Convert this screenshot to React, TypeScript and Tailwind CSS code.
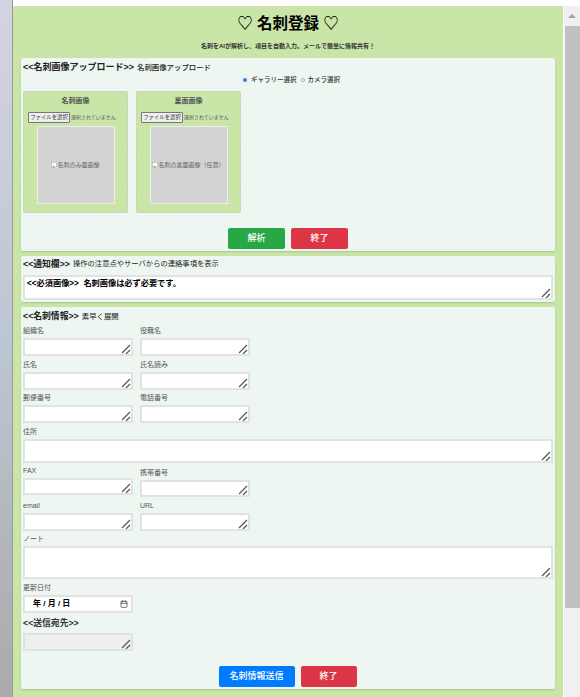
import { Calendar } from "lucide-react";

const font = "font-['Liberation_Sans','Noto_Sans_CJK_JP',sans-serif]";

function Label({ text }: { text: string }) {
  return <div className="h-[8px] text-[7px] leading-[8px] text-[#555]">{text}</div>;
}

// textarea with the heavier resize grip seen in the screenshot
function Box({ h, w, value, disabled = false, mt = "mt-[3px]" }: { h: string; w: string; value?: string; disabled?: boolean; mt?: string }) {
  return (
    <div className={`relative ${mt} ${h} ${w}`}>
      <textarea
        readOnly
        disabled={disabled}
        value={value ?? ""}
        className={`block h-full w-full resize-none rounded-[1px] border-2 border-[#e2e2e2] px-[2px] py-[1px] text-[8.2px] font-bold leading-[11px] text-black ${disabled ? "bg-[#efefef]" : "bg-white"}`}
      />
      <svg width="10" height="10" viewBox="0 0 10 10" className="pointer-events-none absolute bottom-[2px] right-[2px]">
        <path d="M1 9L9 1M5 10L9 6" stroke="#555" strokeWidth="1.2" fill="none" />
      </svg>
    </div>
  );
}

function Field({ label, h = "h-[18px]", full = false, mt, className = "" }: { label: string; h?: string; full?: boolean; mt?: string; className?: string }) {
  return (
    <div className={`${full ? "w-[530px]" : "w-[110px]"} ${className}`}>
      <Label text={label} />
      <Box h={h} w="w-full" mt={mt} />
    </div>
  );
}

function ImageBox({ title, alt }: { title: string; alt: string }) {
  return (
    <div className="h-[122px] w-[105px] rounded-[2px] border border-dashed border-[#ccc] bg-[#c9e6a8]">
      <div className="mt-[5px] text-center text-[7px] font-bold leading-[8px] text-[#555]">{title}</div>
      <div className="mt-[7px] flex items-center gap-[1px] pl-[4px]">
        <button className="h-[11px] w-[42px] shrink-0 whitespace-nowrap rounded-[1px] border border-[#777] bg-[#efefef] p-0 text-[5.4px] leading-[9px] text-[#333]">ファイルを選択</button>
        <span className="whitespace-nowrap text-[5px] text-[#555]">選択されていません</span>
      </div>
      <div className="mx-auto mt-[3px] flex h-[78px] w-[78px] items-center justify-center whitespace-nowrap border border-[#eee] bg-[#d3d3d3] text-[6px] text-[#666]">
        <svg width="6" height="6" viewBox="0 0 7 7" className="shrink-0">
          <rect x="0.5" y="0.5" width="6" height="6" fill="#fff" stroke="#aaa" strokeWidth="0.6" />
          <path d="M1 6l2-2 2 2z" fill="#6aa84f" />
        </svg>
        {alt}
      </div>
    </div>
  );
}

function Btn({ text, color, w }: { text: string; color: string; w: string }) {
  return (
    <button className={`h-[21px] ${w} rounded-[2px] ${color} text-[9px] font-medium text-white`}>{text}</button>
  );
}

export default function App() {
  return (
    <div className={`flex h-[697px] w-[580px] overflow-hidden bg-white ${font}`}>
      <div className="w-[13px] border-r border-[#999] bg-gradient-to-b from-[#d4d4e0] via-[#bcc6d2] to-[#aaaaaa]" />
      <div className="mt-[6px] w-[550px] bg-[#c9e6a8] px-[8px]">
        <h1 className="mt-[8px] text-center text-[15.5px] font-bold leading-[20px] text-black">♡ 名刺登録 ♡</h1>
        <p className="mt-[8px] text-center text-[6px] font-bold leading-[8px] text-[#333]">名刺をAIが解析し、項目を自動入力。メールで簡単に情報共有！</p>

        <section className="mt-[8px] h-[193px] w-[534px] rounded-[2px] bg-[#edf6f1] px-[2px] pt-[4px] shadow-[0_1px_2px_rgba(0,0,0,0.15)]">
          <div className="flex h-[11px] items-center gap-[3px] leading-[11px] text-[#222]">
            <span className="text-[9px] font-bold">&lt;&lt;名刺画像アップロード&gt;&gt;</span>
            <span className="text-[7.4px] font-medium">名刺画像アップロード</span>
          </div>
          <div className="mt-[3px] flex h-[8px] items-center text-[6.5px] font-medium leading-[8px] text-[#333]">
            <span className="ml-[220px] h-[4px] w-[4px] rounded-full bg-[#2f80ed]" />
            <span className="ml-[4px]">ギャラリー選択</span>
            <span className="ml-[4px] h-[4px] w-[4px] rounded-full border border-[#aaa] bg-white" />
            <span className="ml-[3px]">カメラ選択</span>
          </div>
          <div className="mt-[7px] flex gap-[8px]">
            <ImageBox title="名刺画像" alt="名刺のみ面画像" />
            <ImageBox title="裏面画像" alt="名刺の裏面画像（任意）" />
          </div>
          <div className="mt-[15px] flex justify-center gap-[6px]">
            <Btn text="解析" color="bg-[#28a745]" w="w-[57px]" />
            <Btn text="終了" color="bg-[#dc3545]" w="w-[57px]" />
          </div>
        </section>

        <section className="mt-[5px] h-[46px] w-[534px] rounded-[2px] bg-[#edf6f1] px-[2px] pt-[3px] shadow-[0_1px_2px_rgba(0,0,0,0.15)]">
          <div className="flex h-[11px] items-center gap-[3px] text-[#222]">
            <span className="text-[8.8px] font-bold">&lt;&lt;通知欄&gt;&gt;</span>
            <span className="text-[7.3px]">操作の注意点やサーバからの連絡事項を表示</span>
          </div>
          <Box h="h-[25px]" w="w-[530px]" mt="mt-[5px]" value="<<必須画像>>  名刺画像は必ず必要です。" />
        </section>

        <section className="mt-[5px] h-[382px] w-[534px] rounded-[2px] bg-[#edf6f1] px-[2px] pt-[4px] shadow-[0_1px_2px_rgba(0,0,0,0.15)]">
          <div className="flex h-[11px] items-center gap-[3px] text-[#222]">
            <span className="text-[8.8px] font-bold">&lt;&lt;名刺情報&gt;&gt;</span>
            <span className="text-[7.4px]">素早く展開</span>
          </div>
          <div className="mt-[5px] flex flex-col gap-[4.5px]">
            <div className="flex gap-[7px]"><Field label="組織名" /><Field label="役職名" /></div>
            <div className="flex gap-[7px]"><Field label="氏名" /><Field label="氏名読み" /></div>
            <div className="flex gap-[7px]"><Field label="郵便番号" /><Field label="電話番号" /></div>
            <Field label="住所" full h="h-[24px]" />
            <div className="flex gap-[7px]"><Field label="FAX" h="h-[17px]" /><Field label="携帯番号" h="h-[17px]" className="pt-[2px]" /></div>
            <div className="flex gap-[7px]"><Field label="email" /><Field label="URL" /></div>
            <Field label="ノート" full h="h-[33px]" />
            <div className="w-[110px]">
              <Label text="更新日付" />
              <div className="mt-[3px] flex h-[18px] items-center rounded-[1px] border-2 border-[#e2e2e2] bg-white pl-[8px] pr-[3px] text-[8px] font-bold text-black">
                <span className="whitespace-pre">年 / 月 / 日</span>
                <Calendar className="ml-auto h-[8px] w-[8px] text-[#333]" />
              </div>
            </div>
          </div>
          <div className="mt-[4.5px] h-[12px] text-[8.8px] font-bold leading-[12px] text-[#333]">&lt;&lt;送信宛先&gt;&gt;</div>
          <Box h="h-[18px]" w="w-[110px]" mt="mt-[4px]" disabled />
          <div className="mt-[15px] flex justify-center gap-[6px] pr-[1px]">
            <Btn text="名刺情報送信" color="bg-[#007bff]" w="w-[76px]" />
            <Btn text="終了" color="bg-[#dc3545]" w="w-[56px]" />
          </div>
        </section>
      </div>
      <div className="ml-[1px] mt-[6px] flex w-[16px] flex-col bg-[#f0f0f0]">
        <div className="flex h-[20px] items-center justify-center">
          <span className="h-0 w-0 border-x-[4px] border-b-[4px] border-x-transparent border-b-[#a3a3a3]" />
        </div>
        <div className="ml-[1px] h-[582px] bg-[#c0c0c0]" />
      </div>
    </div>
  );
}
